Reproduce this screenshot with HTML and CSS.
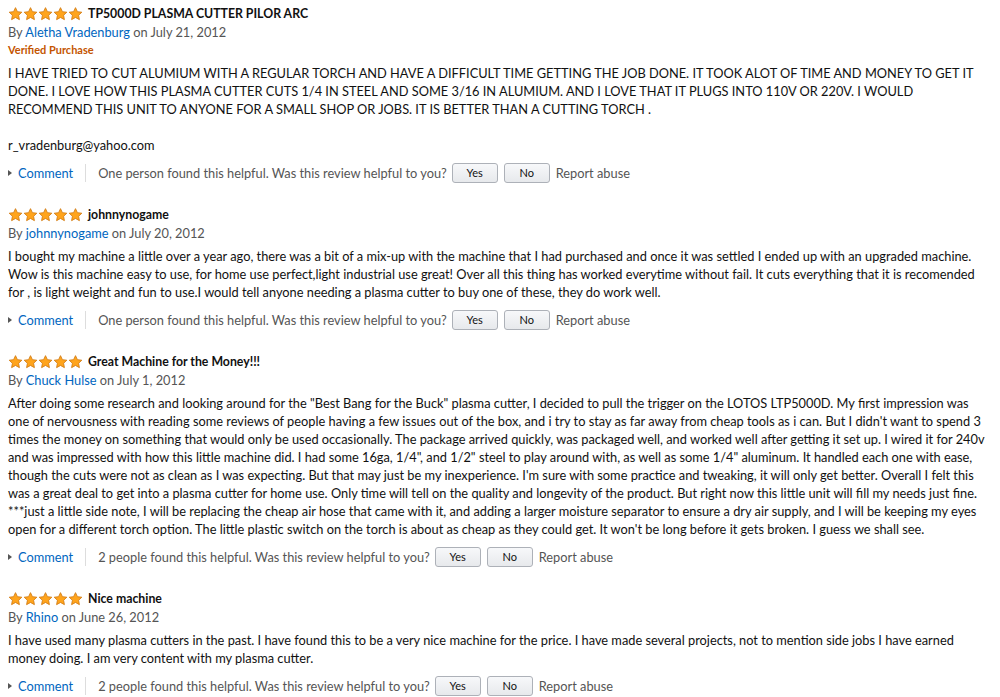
FILE: index.html
```html
<!DOCTYPE html>
<html lang="en">

<head>
    <meta charset="UTF-8">
    <title>Reviews</title>
    <link rel="stylesheet" href="styles.css">
</head>

<body>
    <svg width="0" height="0" style="position:absolute">
        <defs>
            <symbol id="star" viewBox="0 0 16 16">
                <path d="M8 1.2l2.05 4.3 4.7.6-3.45 3.25.88 4.65L8 11.7 3.82 14l.88-4.65L1.25 6.1l4.7-.6z" fill="#ffa41c" stroke="#d17a12" stroke-width="0.9" stroke-linejoin="round"/>
            </symbol>
        </defs>
    </svg>

    <div class="reviews">
        <!-- review 1 -->
        <div class="review">
            <div class="review_head">
                <span class="stars"><svg><use href="#star"/></svg><svg><use href="#star"/></svg><svg><use href="#star"/></svg><svg><use href="#star"/></svg><svg><use href="#star"/></svg></span>
                <span class="review_title">TP5000D PLASMA CUTTER PILOR ARC</span>
            </div>
            <div class="byline">By <a href="javascript:;">Aletha Vradenburg</a> on July 21, 2012</div>
            <div class="verified">Verified Purchase</div>
            <div class="review_text">
                <p>I HAVE TRIED TO CUT ALUMIUM WITH A REGULAR TORCH AND HAVE A DIFFICULT TIME GETTING THE JOB DONE. IT TOOK ALOT OF TIME AND MONEY TO GET IT DONE. I LOVE HOW THIS PLASMA CUTTER CUTS 1/4 IN STEEL AND SOME 3/16 IN ALUMIUM. AND I LOVE THAT IT PLUGS INTO 110V OR 220V. I WOULD RECOMMEND THIS UNIT TO ANYONE FOR A SMALL SHOP OR JOBS. IT IS BETTER THAN A CUTTING TORCH .</p>
                <p>r_vradenburg@yahoo.com</p>
            </div>
            <div class="review_foot">
                <a class="comment" href="javascript:;">Comment</a>
                <span class="helpful">One person found this helpful. Was this review helpful to you?</span>
                <a class="btn" href="javascript:;">Yes</a>
                <a class="btn" href="javascript:;">No</a>
                <span class="report">Report abuse</span>
            </div>
        </div>

        <!-- review 2 -->
        <div class="review">
            <div class="review_head">
                <span class="stars"><svg><use href="#star"/></svg><svg><use href="#star"/></svg><svg><use href="#star"/></svg><svg><use href="#star"/></svg><svg><use href="#star"/></svg></span>
                <span class="review_title">johnnynogame</span>
            </div>
            <div class="byline">By <a href="javascript:;">johnnynogame</a> on July 20, 2012</div>
            <div class="review_text">
                <p>I bought my machine a little over a year ago, there was a bit of a mix-up with the machine that I had purchased and once it was settled I ended up with an upgraded machine. Wow is this machine easy to use, for home use perfect,light industrial use great! Over all this thing has worked everytime without fail. It cuts everything that it is recomended for , is light weight and fun to use.I would tell anyone needing a plasma cutter to buy one of these, they do work well.</p>
            </div>
            <div class="review_foot">
                <a class="comment" href="javascript:;">Comment</a>
                <span class="helpful">One person found this helpful. Was this review helpful to you?</span>
                <a class="btn" href="javascript:;">Yes</a>
                <a class="btn" href="javascript:;">No</a>
                <span class="report">Report abuse</span>
            </div>
        </div>

        <!-- review 3 -->
        <div class="review">
            <div class="review_head">
                <span class="stars"><svg><use href="#star"/></svg><svg><use href="#star"/></svg><svg><use href="#star"/></svg><svg><use href="#star"/></svg><svg><use href="#star"/></svg></span>
                <span class="review_title">Great Machine for the Money!!!</span>
            </div>
            <div class="byline">By <a href="javascript:;">Chuck Hulse</a> on July 1, 2012</div>
            <div class="review_text">
                <p>After doing some research and looking around for the "Best Bang for the Buck" plasma cutter, I decided to pull the trigger on the LOTOS LTP5000D. My first impression was one of nervousness with reading some reviews of people having a few issues out of the box, and i try to stay as far away from cheap tools as i can. But I didn't want to spend 3 times the money on something that would only be used occasionally. The package arrived quickly, was packaged well, and worked well after getting it set up. I wired it for 240v and was impressed with how this little machine did. I had some 16ga, 1/4", and 1/2" steel to play around with, as well as some 1/4" aluminum. It handled each one with ease, though the cuts were not as clean as I was expecting. But that may just be my inexperience. I'm sure with some practice and tweaking, it will only get better. Overall I felt this was a great deal to get into a plasma cutter for home use. Only time will tell on the quality and longevity of the product. But right now this little unit will fill my needs just fine. ***just a little side note, I will be replacing the cheap air hose that came with it, and adding a larger moisture separator to ensure a dry air supply, and I will be keeping my eyes open for a different torch option. The little plastic switch on the torch is about as cheap as they could get. It won't be long before it gets broken. I guess we shall see.</p>
            </div>
            <div class="review_foot">
                <a class="comment" href="javascript:;">Comment</a>
                <span class="helpful">2 people found this helpful. Was this review helpful to you?</span>
                <a class="btn" href="javascript:;">Yes</a>
                <a class="btn" href="javascript:;">No</a>
                <span class="report">Report abuse</span>
            </div>
        </div>

        <!-- review 4 -->
        <div class="review">
            <div class="review_head">
                <span class="stars"><svg><use href="#star"/></svg><svg><use href="#star"/></svg><svg><use href="#star"/></svg><svg><use href="#star"/></svg><svg><use href="#star"/></svg></span>
                <span class="review_title">Nice machine</span>
            </div>
            <div class="byline">By <a href="javascript:;">Rhino</a> on June 26, 2012</div>
            <div class="review_text">
                <p>I have used many plasma cutters in the past. I have found this to be a very nice machine for the price. I have made several projects, not to mention side jobs I have earned money doing. I am very content with my plasma cutter.</p>
            </div>
            <div class="review_foot">
                <a class="comment" href="javascript:;">Comment</a>
                <span class="helpful">2 people found this helpful. Was this review helpful to you?</span>
                <a class="btn" href="javascript:;">Yes</a>
                <a class="btn" href="javascript:;">No</a>
                <span class="report">Report abuse</span>
            </div>
        </div>
    </div>
</body>

</html>
```

FILE: styles.css
```css
* {
    margin: 0px;
    padding: 0px;
    box-sizing: border-box;
}

body {
    font-family: Lato, "Open Sans", sans-serif;
    font-size: 12.8px;
    line-height: 18px;
    color: #111;
    background: #fff;
}

a {
    color: #0066c0;
    text-decoration: none;
}

/*
 * 评论列表
 */
.reviews {
    padding: 5px 8px 0 8px;
}

.review {
    margin-bottom: 23px;
}

/* 标题行 */
.review_head {
    display: flex;
    align-items: center;
    gap: 5px;
    height: 18px;
}

.stars {
    display: flex;
    height: 16px;
}

.stars svg {
    width: 15px;
    height: 16px;
}

.review_title {
    font-weight: bold;
    font-size: 12.3px;
}

.byline {
    color: #555;
}

.verified {
    color: #c45500;
    font-weight: bold;
    font-size: 11px;
    line-height: 18px;
}

.review_text {
    margin-top: 5px;
}

.review_text p + p {
    margin-top: 18px;
}

/* 底部 */
.review_foot {
    display: flex;
    align-items: center;
    margin-top: 9px;
    height: 20px;
}

.comment {
    position: relative;
    padding-left: 10px;
    padding-right: 12px;
    border-right: 1px solid #ddd;
    margin-right: 12px;
}

.comment::before {
    content: "";
    position: absolute;
    left: 0;
    top: 6px;
    border-left: 4px solid #555;
    border-top: 3px solid transparent;
    border-bottom: 3px solid transparent;
}

.helpful {
    color: #555;
    margin-right: 5px;
}

.btn {
    display: inline-block;
    width: 46px;
    height: 20px;
    line-height: 18px;
    text-align: center;
    font-size: 11px;
    color: #111;
    border: 1px solid #adb1b8;
    border-radius: 3px;
    background: linear-gradient(#f7f8fa, #e7e9ec);
    margin-right: 6px;
}

.report {
    color: #555;
}
```
